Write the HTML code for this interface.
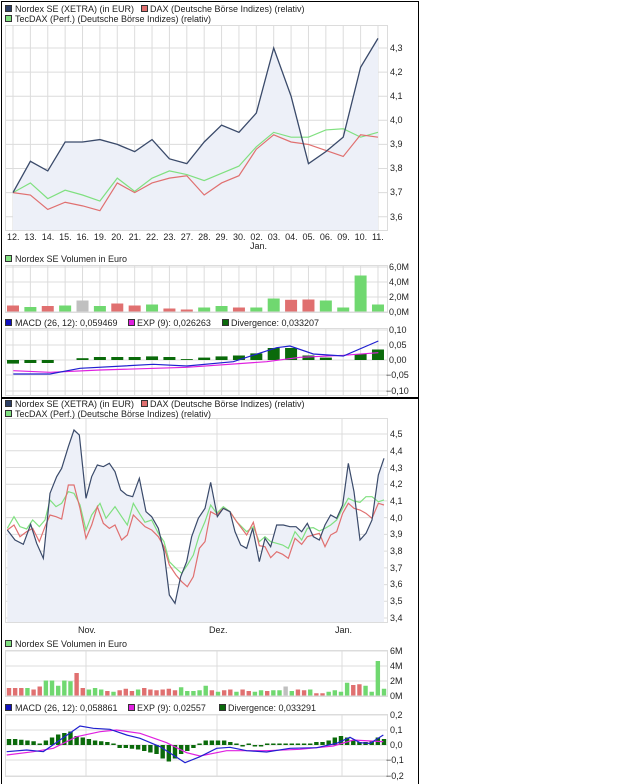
<!DOCTYPE html>
<html><head><meta charset="utf-8"><style>
body{margin:0;background:#fff;width:640px;height:784px;overflow:hidden}
svg{display:block;font-family:"Liberation Sans",sans-serif;font-size:9px}
</style></head><body>
<svg id="s" width="640" height="784" xmlns="http://www.w3.org/2000/svg">
<rect x="0" y="0" width="640" height="784" fill="#fff"/>
<rect x="1.5" y="1.5" width="417" height="396" fill="none" stroke="#000"/>
<rect x="1.5" y="398.5" width="417" height="390" fill="none" stroke="#000"/>
<g id="grid"></g>
<g id="data"></g>
<!-- top legend -->
<g fill="#222">
<rect x="5.5" y="5.5" width="6" height="6" fill="#2d3f66" stroke="#333"/><text x="15" y="12">Nordex SE (XETRA) (in EUR)</text>
<rect x="141.5" y="5.5" width="6" height="6" fill="#e07070" stroke="#333"/><text x="150" y="12">DAX (Deutsche Börse Indizes) (relativ)</text>
<rect x="5.5" y="15.5" width="6" height="6" fill="#80e080" stroke="#333"/><text x="15" y="22">TecDAX (Perf.) (Deutsche Börse Indizes) (relativ)</text>
<text x="390" y="51">4,3</text><text x="390" y="75">4,2</text><text x="390" y="99">4,1</text><text x="390" y="123">4,0</text><text x="390" y="147">3,9</text><text x="390" y="171">3,8</text><text x="390" y="195">3,7</text><text x="390" y="220">3,6</text>
<g id="toplabels"></g>
<text x="250" y="249">Jan.</text>
<rect x="5.5" y="255.5" width="6" height="6" fill="#80e080" stroke="#333"/><text x="15" y="262">Nordex SE Volumen in Euro</text>
<text x="389" y="270">6,0M</text><text x="389" y="285">4,0M</text><text x="389" y="300">2,0M</text><text x="389" y="315">0,0M</text>
<rect x="5.5" y="319.5" width="6" height="6" fill="#1010c0" stroke="#333"/><text x="15" y="326">MACD (26, 12): 0,059469</text>
<rect x="128.5" y="319.5" width="6" height="6" fill="#e020e0" stroke="#333"/><text x="137" y="326">EXP (9): 0,026263</text>
<rect x="222.5" y="319.5" width="6" height="6" fill="#0a6a0a" stroke="#333"/><text x="231" y="326">Divergence: 0,033207</text>
<text x="389" y="333">0,10</text><text x="389" y="348">0,05</text><text x="389" y="363">0,00</text><text x="386" y="378">−0,05</text><text x="386" y="394">−0,10</text>
<!-- bottom legend -->
<rect x="5.5" y="400.5" width="6" height="6" fill="#2d3f66" stroke="#333"/><text x="15" y="407">Nordex SE (XETRA) (in EUR)</text>
<rect x="141.5" y="400.5" width="6" height="6" fill="#e07070" stroke="#333"/><text x="150" y="407">DAX (Deutsche Börse Indizes) (relativ)</text>
<rect x="5.5" y="410.5" width="6" height="6" fill="#80e080" stroke="#333"/><text x="15" y="417">TecDAX (Perf.) (Deutsche Börse Indizes) (relativ)</text>
<text x="390" y="437">4,5</text><text x="390" y="454">4,4</text><text x="390" y="471">4,3</text><text x="390" y="487">4,2</text><text x="390" y="504">4,1</text><text x="390" y="521">4,0</text><text x="390" y="537">3,9</text><text x="390" y="554">3,8</text><text x="390" y="571">3,7</text><text x="390" y="587">3,6</text><text x="390" y="604">3,5</text><text x="390" y="621">3,4</text>
<text x="78" y="633">Nov.</text><text x="209" y="633">Dez.</text><text x="335" y="633">Jan.</text>
<rect x="5.5" y="640.5" width="6" height="6" fill="#80e080" stroke="#333"/><text x="15" y="647">Nordex SE Volumen in Euro</text>
<text x="390" y="654">6M</text><text x="390" y="669">4M</text><text x="390" y="684">2M</text><text x="390" y="699">0M</text>
<rect x="5.5" y="704.5" width="6" height="6" fill="#1010c0" stroke="#333"/><text x="15" y="711">MACD (26, 12): 0,058861</text>
<rect x="128.5" y="704.5" width="6" height="6" fill="#e020e0" stroke="#333"/><text x="137" y="711">EXP (9): 0,02557</text>
<rect x="219.5" y="704.5" width="6" height="6" fill="#0a6a0a" stroke="#333"/><text x="228" y="711">Divergence: 0,033291</text>
<text x="390" y="718">0,2</text><text x="390" y="733">0,1</text><text x="390" y="748">0,0</text><text x="386" y="763">−0,1</text><text x="386" y="779">−0,2</text>
</g>
</svg>
<script>
var NS="http://www.w3.org/2000/svg";
function el(p,t,a){var e=document.createElementNS(NS,t);for(var k in a)e.setAttribute(k,a[k]);p.appendChild(e);return e;}
var G=document.getElementById("grid"),D=document.getElementById("data"),TL=document.getElementById("toplabels");
var gc="#dcdcdc";
// top chart
var X=function(i){return 13+i*17.38;};
var labs=["12.","13.","14.","15.","16.","19.","20.","21.","22.","23.","27.","28.","29.","30.","02.","03.","04.","05.","06.","09.","10.","11."];
function panel(y0,y1){el(G,"rect",{x:5.5,y:y0+.5,width:382,height:y1-y0,fill:"#fff",stroke:gc});}
panel(25,230);panel(265,312);panel(328,395);
for(var i=0;i<22;i++){var x=X(i);
 [[25,230],[265,312],[328,395]].forEach(function(r){el(G,"line",{x1:x,x2:x,y1:r[0],y2:r[1],stroke:gc});});
 var t=el(TL,"text",{x:x-6,y:240});t.textContent=labs[i];}
var Yt=function(v){return 48+(4.3-v)*241;};
for(var v=3.6;v<4.35;v+=0.1)el(G,"line",{x1:5,x2:388,y1:Yt(v),y2:Yt(v),stroke:gc});
[267,282,297,312].forEach(function(y){el(G,"line",{x1:5,x2:388,y1:y,y2:y,stroke:gc});});
[330,345,360,375,391].forEach(function(y){el(G,"line",{x1:5,x2:388,y1:y,y2:y,stroke:gc});});
var N=[3.70,3.83,3.79,3.91,3.91,3.92,3.90,3.87,3.92,3.84,3.82,3.91,3.98,3.95,4.03,4.30,4.10,3.82,3.87,3.93,4.22,4.34];
var DX=[3.70,3.69,3.63,3.66,3.645,3.625,3.74,3.70,3.74,3.76,3.77,3.69,3.74,3.77,3.88,3.94,3.91,3.90,3.875,3.85,3.94,3.93];
var TD=[3.70,3.74,3.675,3.71,3.69,3.665,3.76,3.705,3.76,3.79,3.775,3.75,3.78,3.81,3.89,3.95,3.93,3.93,3.96,3.965,3.93,3.95];
function pts(a){return a.map(function(v,i){return X(i)+","+Yt(v);}).join(" ");}
el(D,"polygon",{points:X(0)+",230 "+pts(N)+" "+X(21)+",230",fill:"#edf0f8"});
el(D,"polyline",{points:pts(TD),fill:"none",stroke:"#80e080","stroke-width":1.2});
el(D,"polyline",{points:pts(DX),fill:"none",stroke:"#e07070","stroke-width":1.2});
el(D,"polyline",{points:pts(N),fill:"none",stroke:"#3a4a6a","stroke-width":1.3});
var R="#e07070",Gn="#70d870",Gy="#c0c0c0";
var vb=[[6,R],[4.5,Gn],[5.5,R],[6,Gn],[11,Gy],[5.5,Gn],[8,R],[6,R],[7,Gn],[3,R],[2,R],[4,Gn],[5.5,Gn],[4,R],[4,Gn],[13,Gn],[11.7,R],[12,R],[11,Gn],[4,Gn],[36,Gn],[7,Gn]];
vb.forEach(function(b,i){el(D,"rect",{x:X(i)-6,y:311.5-b[0],width:12,height:b[0],fill:b[1]});});
var dv=[-.012,-.01,-.01,0,.006,.01,.01,.01,.012,.01,.003,.008,.012,.015,.022,.04,.04,.015,.008,0,.02,.035];
dv.forEach(function(v,i){var h=v*300;if(h==0)return;el(D,"rect",{x:X(i)-6,y:h>0?360-h:360,width:12,height:Math.abs(h),fill:"#0a6a0a"});});
function zl(a,yo,c){return el(D,"polyline",{points:a.map(function(p){return (p[0]/3)+","+(p[1]/3+yo);}).join(" "),fill:"none",stroke:c,"stroke-width":1.2});}
zl([[40,362],[150,367],[300,360],[560,352],[800,335],[900,322],[1030,316],[1135,308]],250,"#e020e0");
zl([[40,372],[150,372],[240,355],[460,343],[560,348],[700,335],[830,293],[870,288],[940,312],[1030,318],[1135,273]],250,"#2020d0");
// bottom chart
panel(418,622);panel(650,696);panel(714,776);
[86,217,342].forEach(function(x){[[418,622],[650,696],[714,776]].forEach(function(r){el(G,"line",{x1:x,x2:x,y1:r[0],y2:r[1],stroke:gc});});});
for(var k=0;k<12;k++){var y=434+k*16.73;el(G,"line",{x1:5,x2:388,y1:y,y2:y,stroke:gc});}
[651,666,681,696].forEach(function(y){el(G,"line",{x1:5,x2:388,y1:y,y2:y,stroke:gc});});
[715,730,745,760,776].forEach(function(y){el(G,"line",{x1:5,x2:388,y1:y,y2:y,stroke:gc});});
var bN=[[22,405],[45,435],[70,448],[92,388],[110,445],[130,490],[150,295],[170,245],[185,220],[205,155],[222,105],[238,120],[258,310],[275,245],[292,210],[310,215],[328,205],[345,230],[362,285],[380,300],[398,305],[418,250],[438,350],[455,365],[475,400],[492,470],[508,600],[525,625],[542,545],[560,500],[575,425],[595,370],[615,340],[632,262],[652,365],[670,340],[690,350],[705,410],[722,450],[740,460],[758,400],[778,500],[795,430],[812,455],[830,390],[850,390],[870,395],[888,395],[905,410],[922,385],[940,425],[958,435],[975,390],[992,360],[1010,370],[1028,330],[1045,205],[1062,290],[1080,435],[1098,415],[1116,375],[1135,240],[1152,190]];
var bD=[[22,405],[42,390],[60,425],[80,410],[98,400],[118,440],[135,395],[150,360],[168,365],[185,372],[205,270],[222,270],[240,340],[258,430],[275,390],[292,335],[310,385],[328,400],[345,390],[365,435],[382,420],[400,360],[418,378],[435,395],[455,405],[475,425],[492,455],[508,510],[528,540],[545,560],[562,575],[580,545],[598,460],[615,440],[632,350],[650,360],[670,340],[690,350],[710,380],[740,420],[760,382],[778,452],[795,455],[812,488],[830,470],[848,478],[865,490],[885,430],[905,448],[922,425],[940,420],[958,415],[975,455],[992,420],[1010,410],[1028,355],[1045,325],[1062,340],[1080,345],[1098,355],[1116,370],[1135,325],[1152,330]];
var bT=[[22,400],[42,365],[60,395],[80,402],[98,375],[118,395],[135,375],[150,315],[168,335],[185,325],[205,290],[222,295],[240,330],[258,405],[275,360],[300,325],[318,370],[345,335],[365,365],[382,390],[400,325],[418,355],[435,382],[455,375],[475,415],[492,440],[508,500],[528,520],[545,535],[562,510],[580,480],[598,420],[615,380],[632,330],[650,355],[670,335],[690,350],[710,380],[740,410],[760,395],[778,440],[795,425],[812,440],[830,445],[848,450],[865,460],[885,410],[905,435],[922,400],[940,398],[958,408],[975,400],[992,390],[1010,375],[1028,340],[1045,310],[1062,318],[1080,322],[1098,305],[1116,305],[1135,320],[1152,315]];
el(D,"polygon",{points:"7.3,622 "+bN.map(function(p){return (p[0]/3)+","+(p[1]/3+395);}).join(" ")+" 384,622",fill:"#edf0f8"});
zl(bT,395,"#80e080");zl(bD,395,"#e07070");zl(bN,395,"#3a4a6a");
var bv=[[1,R],[1,R],[1,R],[1,Gn],[.8,R],[1.2,R],[2,Gn],[2,Gn],[1.3,Gn],[2,Gn],[1.9,Gn],[3,R],[1,R],[.8,Gn],[1,Gn],[.8,Gn],[.6,R],[.5,Gn],[.7,R],[.9,R],[.6,R],[.8,Gn],[1,R],[.8,R],[.7,R],[.8,R],[.9,R],[.7,R],[1.1,Gn],[.6,Gn],[.6,Gn],[.7,Gn],[1.3,Gn],[.7,R],[.5,Gn],[.7,R],[.8,R],[.5,Gn],[.8,R],[.6,R],[.5,Gn],[.7,Gn],[.6,R],[.7,Gn],[.7,Gn],[1.2,Gy],[.6,Gn],[.8,R],[.7,R],[.8,Gn],[.3,R],[.3,R],[.5,Gn],[.7,Gn],[.5,Gn],[1.7,Gn],[1.4,R],[1.5,R],[1.3,Gn],[.5,Gn],[4.6,Gn],[.9,Gn]];
var bs=(384-9)/(bv.length-1);
bv.forEach(function(b,i){var h=b[0]*7.5;el(D,"rect",{x:9+i*bs-2.2,y:695.5-h,width:4.4,height:h,fill:b[1]});});
var bdv=[.4,.4,.35,.3,.25,.1,.3,.5,.7,.8,.9,.6,.5,.4,.3,.25,.2,0,-.2,-.2,-.25,-.3,-.4,-.5,-.6,-.9,-1.1,-.9,-.6,-.4,-.2,0,.3,.3,.3,.3,.2,0,-.1,0,-.1,-.1,0,.1,.1,.1,.1,.1,.1,.1,.2,.2,.3,.5,.6,.5,.3,.2,.2,.3,.5,.4];
var ds=(384-9)/(bdv.length-1);
bdv.forEach(function(v,i){var h=v*15;if(h==0){h=1.5;}el(D,"rect",{x:9+i*ds-2.2,y:h>0?745-h:745,width:4.4,height:Math.abs(h),fill:"#0a6a0a"});});
zl([[20,405],[100,395],[160,385],[230,350],[300,335],[350,330],[420,340],[500,368],[560,398],[600,408],[680,392],[800,392],[900,388],[1000,378],[1060,360],[1150,365]],620,"#e020e0");
zl([[20,395],[80,390],[130,395],[180,360],[240,318],[280,325],[330,328],[380,345],[420,355],[480,380],[555,428],[600,410],[650,385],[690,382],[740,392],[800,396],[870,385],[950,383],[1010,370],[1050,352],[1080,368],[1110,370],[1150,345]],620,"#2020d0");
</script>
</body></html>
